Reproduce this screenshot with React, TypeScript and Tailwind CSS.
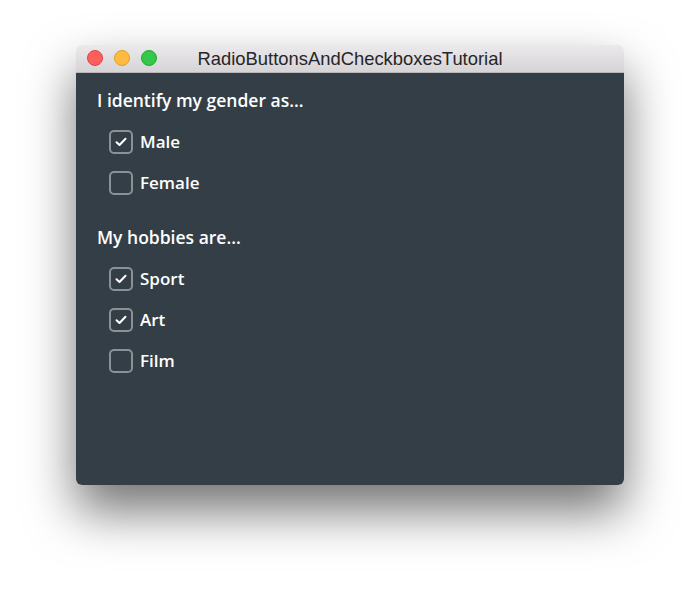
import React from "react";

type Item = { label: string; checked: boolean };

const gender: Item[] = [
  { label: "Male", checked: true },
  { label: "Female", checked: false },
];

const hobbies: Item[] = [
  { label: "Sport", checked: true },
  { label: "Art", checked: true },
  { label: "Film", checked: false },
];

const Check = () => (
  <svg width="12" height="10" viewBox="0 0 12 10" fill="none">
    <path d="M1.5 5.2 L4.5 8 L10.5 1.8" stroke="white" strokeWidth="2" strokeLinecap="round" strokeLinejoin="round" />
  </svg>
);

const CheckRow = ({ item }: { item: Item }) => (
  <div className="h-[41px] flex items-center gap-[7px] pl-[12px]">
    <div className="w-[24px] h-[24px] rounded-[5px] border-2 border-[#8a9298] flex items-center justify-center">
      {item.checked && <Check />}
    </div>
    <span className="text-[17px] font-semibold text-white">{item.label}</span>
  </div>
);

const Heading = ({ children }: { children: React.ReactNode }) => (
  <div className="h-[41px] flex items-center text-[17.5px] font-semibold text-white">{children}</div>
);

export default function App() {
  return (
    <div className="w-[700px] h-[593px] bg-white pl-[76px] pt-[45px]" style={{ fontFamily: "'Open Sans', 'Noto Sans', sans-serif" }}>
      <div className="w-[548px] h-[440px] rounded-[6px] overflow-hidden flex flex-col shadow-[0_26px_50px_rgba(0,0,0,0.55)]">
        <div className="h-[28px] shrink-0 relative flex items-center justify-center bg-gradient-to-b from-[#ebe9eb] to-[#d6d4d6] border-b border-[#b9b7b9]">
          <div className="absolute left-[11px] top-[5px] flex gap-[11px]">
            <span className="w-[16px] h-[16px] rounded-full bg-[#fc605c] border border-[#e0443e]" />
            <span className="w-[16px] h-[16px] rounded-full bg-[#fdbc40] border border-[#dea123]" />
            <span className="w-[16px] h-[16px] rounded-full bg-[#34c84a] border border-[#1aab29]" />
          </div>
          <span className="text-[18.4px] text-[#262626] pt-[1px]" style={{ fontFamily: "'Liberation Sans', Arial, sans-serif" }}>
            RadioButtonsAndCheckboxesTutorial
          </span>
        </div>
        <div className="flex-1 bg-[#343e46] pl-[21px] pt-[7px]">
          <Heading>I identify my gender as...</Heading>
          {gender.map(g => <CheckRow key={g.label} item={g} />)}
          <div className="h-[14px]" />
          <Heading>My hobbies are...</Heading>
          {hobbies.map(h => <CheckRow key={h.label} item={h} />)}
        </div>
      </div>
    </div>
  );
}
